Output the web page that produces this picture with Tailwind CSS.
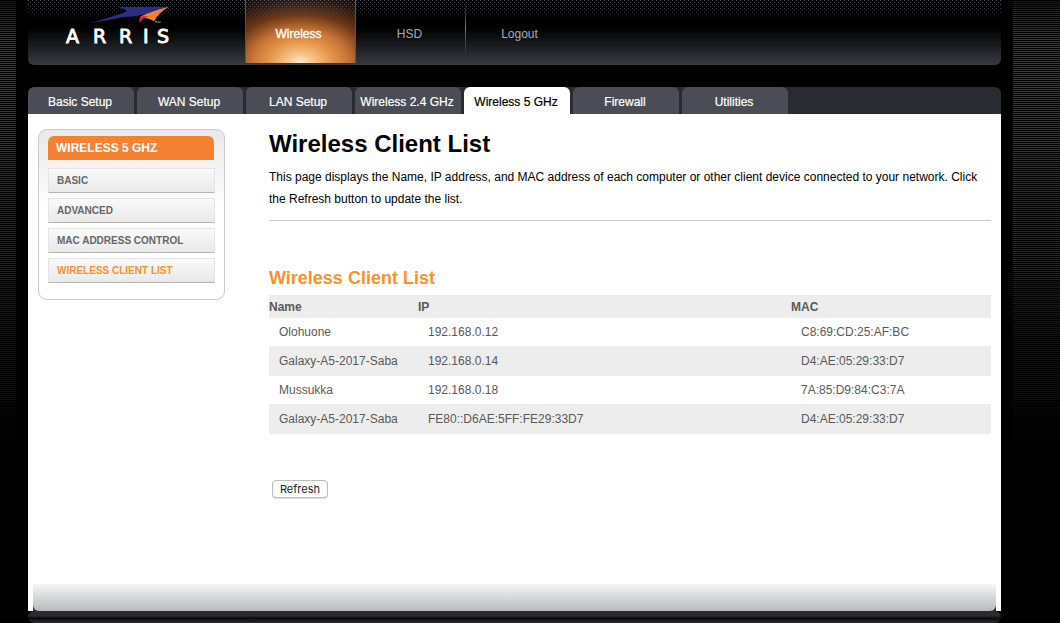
<!DOCTYPE html>
<html lang="en">
<head>
<meta charset="utf-8">
<meta name="viewport" content="width=device-width, initial-scale=1">
<title>Wireless Client List</title>
<script src="https://cdn.jsdelivr.net/npm/@tailwindcss/browser@4"></script>
</head>
<body class="flex min-h-screen bg-black font-['Liberation_Sans',Arial,sans-serif] text-xs text-black">
  <div class="h-[500px] w-4 shrink-0 bg-[linear-gradient(#0009,#0000_40px,#0000_90px,#000_460px),repeating-linear-gradient(#000_0_1px,#3c3c3c_1px_2px)]"></div>

  <div class="flex min-w-0 grow flex-col px-3">
    <header class="relative flex h-[65px] overflow-hidden rounded-b-md bg-[linear-gradient(#000_28px,#383b42)]">
      <a href="#" class="relative z-10 w-[217px] shrink-0 pl-9" aria-label="ARRIS home">
        <svg class="h-12 w-28" viewBox="0 0 112 48">
          <path d="M26 23.500 L57.500 13.500 Q65 11.500 61 9.500 L54 7 L105 6.800 L84 13.500 Q70 17 60 17 Z" fill="#2b2d83"/>
          <path d="M105 6.800 Q94 13 90 21.500 Q85 17.500 79 18 Q77 18 76.500 16.500 Q88 11 105 6.800 Z" fill="#f58233"/>
          <path d="M76.500 16.500 L84 16 Q79.500 18 75.500 22.500 Q74.500 19 76.500 16.500 Z" fill="#d9203a"/>
          <path d="M91 21.500h2M92 21.500v1.500M94 23v-1.500l1 1 1-1v1.500" fill="none" stroke="#ccc" stroke-width=".6"/>
          <text x="2 29 55 79 93" y="43" fill="#fff" stroke="#fff" stroke-width=".9" font-family="DejaVu Sans, sans-serif" font-size="19">ARRIS</text>
        </svg>
      </a>
      <nav class="flex" aria-label="Main">
        <a href="#" class="h-[63px] w-[111px] border-x border-[#665047] bg-[radial-gradient(ellipse_94px_64px_at_50%_100%,#ffebcc,#f6bf80_16%,#e8994f_32%,#c87336_52%,#6b3715_76%,#2c170a_100%,#120904_120%)] pr-1 text-center leading-[68px] text-white [-webkit-text-stroke:0.3px_#fff]" aria-current="page">Wireless</a>
        <a href="#" class="w-[109px] pr-0.5 text-center leading-[68px] text-[#aaabb5]">HSD</a>
        <div class="h-14 w-px bg-linear-to-b from-transparent via-[#77787c] to-transparent"></div>
        <a href="#" class="w-[107px] text-center leading-[68px] text-[#aaabb5]">Logout</a>
      </nav>
      <!-- halftone dots fading down from the top edge -->
      <svg class="pointer-events-none absolute inset-x-0 top-0 h-5 w-full mask-[linear-gradient(#000,transparent)]" aria-hidden="true">
        <defs>
          <pattern id="dots" width="4" height="4" patternUnits="userSpaceOnUse">
            <rect width="1" height="1" x="0" y="0" fill="#5a5d68"/>
            <rect width="1" height="1" x="2" y="2" fill="#5a5d68"/>
          </pattern>
        </defs>
        <rect width="100%" height="100%" fill="url(#dots)"/>
      </svg>
    </header>

    <nav class="mt-[22px] flex h-[27px] gap-[3px] overflow-hidden rounded-t-md bg-[#282b30] text-center leading-[30px] text-white [-webkit-text-stroke:0.2px]" aria-label="Sections">
      <a href="#" class="w-[106px] rounded-t-md bg-[#4a4d56] pr-0.5">Basic Setup</a>
      <a href="#" class="w-[106px] rounded-t-md bg-[#4a4d56] pr-0.5">WAN Setup</a>
      <a href="#" class="w-[106px] rounded-t-md bg-[#4a4d56] pr-0.5">LAN Setup</a>
      <a href="#" class="w-[106px] rounded-t-md bg-[#4a4d56] pr-0.5 whitespace-nowrap">Wireless 2.4 GHz</a>
      <a href="#" class="w-[106px] rounded-t-md bg-white pr-0.5 text-black" aria-current="page">Wireless 5 GHz</a>
      <a href="#" class="w-[106px] rounded-t-md bg-[#4a4d56] pr-0.5">Firewall</a>
      <a href="#" class="w-[106px] rounded-t-md bg-[#4a4d56] pr-0.5">Utilities</a>
    </nav>

    <div class="flex grow flex-col bg-white">
      <div class="flex grow items-start px-[10px] pt-[15px]">
        <aside class="w-[187px] shrink-0 rounded-[9px] border border-[#c8c9ca] bg-[linear-gradient(#e9e9ea,#fff_80px)] px-[9px] pt-1.5 pb-4">
          <h2 class="mr-px h-6 rounded-t-md bg-[#f58233] pl-2 text-xs leading-6 font-bold text-white">WIRELESS 5 GHZ</h2>
          <ul class="mt-2 flex flex-col gap-[5px] text-[10px] leading-6 font-bold text-[#666]">
            <li><a href="#" class="block h-[25px] border border-[#e4e4e4] border-b-[#b4b4b4] bg-linear-to-b from-[#fafafa] to-[#e9e9e9] pl-2">BASIC</a></li>
            <li><a href="#" class="block h-[25px] border border-[#e4e4e4] border-b-[#b4b4b4] bg-linear-to-b from-[#fafafa] to-[#e9e9e9] pl-2">ADVANCED</a></li>
            <li><a href="#" class="block h-[25px] border border-[#e4e4e4] border-b-[#b4b4b4] bg-linear-to-b from-[#fafafa] to-[#e9e9e9] pl-2">MAC ADDRESS CONTROL</a></li>
            <li><a href="#" class="block h-[25px] border border-[#e4e4e4] border-b-[#b4b4b4] bg-linear-to-b from-[#fafafa] to-[#e9e9e9] pl-2 text-[#f9922b]" aria-current="page">WIRELESS CLIENT LIST</a></li>
          </ul>
        </aside>

        <main class="ml-11 min-w-0 grow">
          <h1 class="text-2xl leading-[30px] font-bold">Wireless Client List</h1>
          <p class="mt-[7px] leading-[22px]">This page displays the Name, IP address, and MAC address of each computer or other client device connected to your network. Click the Refresh button to update the list.</p>
          <hr class="mt-[10px] ml-px border-[#c8c8c8]">
          <h2 class="mt-[46px] text-lg leading-[22px] font-bold text-[#f9922b]">Wireless Client List</h2>
          <table class="mt-1.5 w-full table-fixed border-collapse text-left text-[#595959]">
            <thead>
              <tr class="h-[23px] bg-[#ededed]">
                <th class="w-[149px] p-0">Name</th>
                <th class="w-[373px] p-0">IP</th>
                <th class="p-0">MAC</th>
              </tr>
            </thead>
            <tbody class="[&_td]:py-0 [&_td]:pr-0 [&_td]:pl-2.5">
              <tr class="h-7"><td>Olohuone</td><td>192.168.0.12</td><td>C8:69:CD:25:AF:BC</td></tr>
              <tr class="h-[30px] bg-[#ededed]"><td>Galaxy-A5-2017-Saba</td><td>192.168.0.14</td><td>D4:AE:05:29:33:D7</td></tr>
              <tr class="h-7"><td>Mussukka</td><td>192.168.0.18</td><td>7A:85:D9:84:C3:7A</td></tr>
              <tr class="h-[30px] bg-[#ededed]"><td>Galaxy-A5-2017-Saba</td><td>FE80::D6AE:5FF:FE29:33D7</td><td>D4:AE:05:29:33:D7</td></tr>
            </tbody>
          </table>
          <button type="button" class="mt-[46px] ml-[3px] block h-[18px] w-14 rounded border border-[#bdbdbd] bg-white font-['Inter',sans-serif] text-[11px] leading-4 text-[#222] shadow-[0_1px_0_#ddd]">Refresh</button>
        </main>
      </div>
      <div class="mx-[5px] h-[27px] bg-[#282b30]">
        <div class="h-full rounded-b-md bg-linear-to-b from-[#f6f6f6] to-[#b9babc]"></div>
      </div>
    </div>
    <div class="h-3 rounded-md bg-[linear-gradient(#282b30_5px,#0c0c0d_7px,#2c2c2d)]"></div>
  </div>

  <div class="h-[500px] w-[47px] shrink-0 bg-[linear-gradient(#0009,#0000_40px,#0000_90px,#000_460px),repeating-linear-gradient(#000_0_1px,#3c3c3c_1px_2px)]"></div>
</body>
</html>
